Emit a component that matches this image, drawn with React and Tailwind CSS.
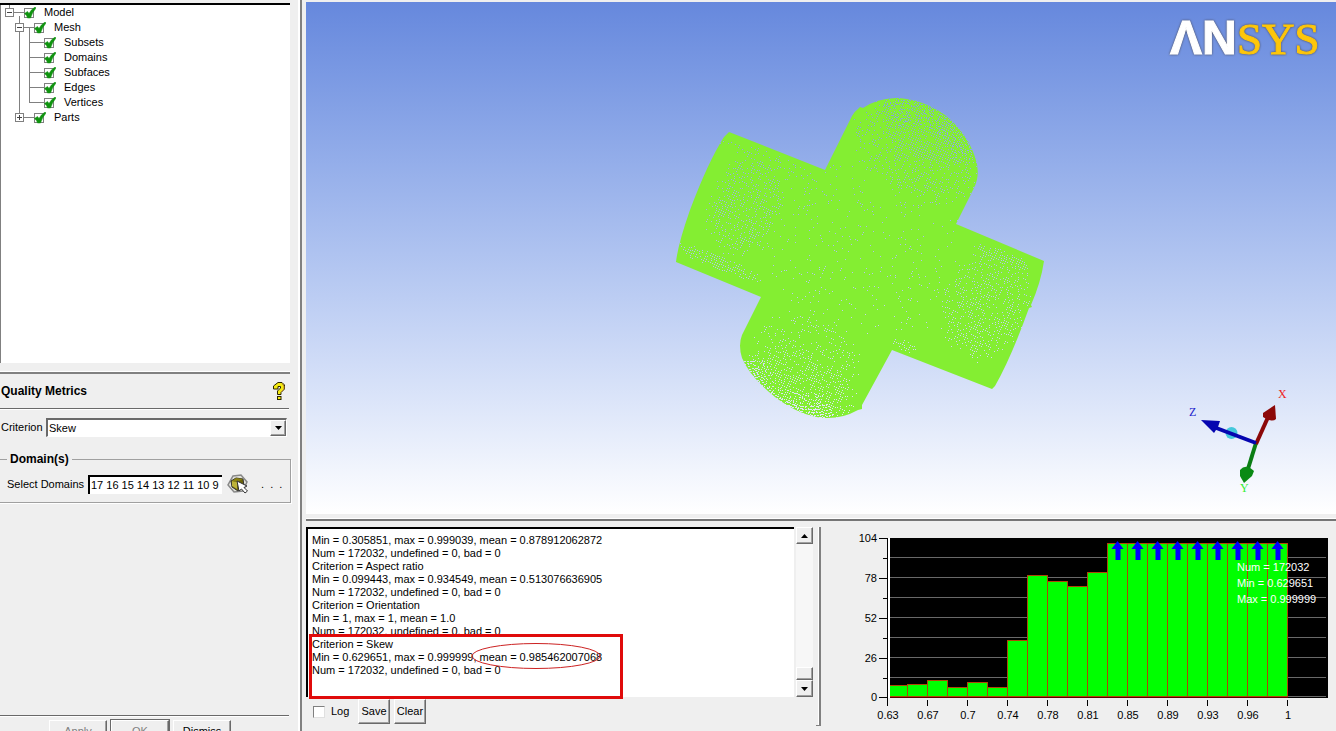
import { useState } from "react";
import clsx from "clsx";

const TREE = [
  { name: "Model", level: 0, node: "minus", lines: "M9.5 0V3M14 7.5H24M19.5 11V15" },
  { name: "Mesh", level: 1, node: "minus", lines: "M19.5 0V3M19.5 12V15M24 7.5H34M29.5 8V15" },
  { name: "Subsets", level: 2, lines: "M19.5 0V15M29.5 0V15M29 7.5H44" },
  { name: "Domains", level: 2, lines: "M19.5 0V15M29.5 0V15M29 7.5H44" },
  { name: "Subfaces", level: 2, lines: "M19.5 0V15M29.5 0V15M29 7.5H44" },
  { name: "Edges", level: 2, lines: "M19.5 0V15M29.5 0V15M29 7.5H44" },
  { name: "Vertices", level: 2, lines: "M19.5 0V15M29.5 0V8M29 7.5H44" },
  { name: "Parts", level: 1, node: "plus", lines: "M19.5 0V3M24 7.5H34" },
];

const LOG = `Min = 0.305851, max = 0.999039, mean = 0.878912062872
Num = 172032, undefined = 0, bad = 0
Criterion = Aspect ratio
Min = 0.099443, max = 0.934549, mean = 0.513076636905
Num = 172032, undefined = 0, bad = 0
Criterion = Orientation
Min = 1, max = 1, mean = 1.0
Num = 172032, undefined = 0, bad = 0
Criterion = Skew
Min = 0.629651, max = 0.999999, mean = 0.985462007068
Num = 172032, undefined = 0, bad = 0`;

// y of each bar top, bars are 20 wide
const BAR_TOPS = [685, 684, 680, 687, 682, 687, 640, 575, 581, 586, 572, 543, 543, 543, 543, 543, 543, 543, 543, 543];
const X_LABELS = ["0.63", "0.67", "0.7", "0.74", "0.78", "0.81", "0.85", "0.89", "0.93", "0.96", "1"];
const Y_LABELS = ["104", "78", "52", "26", "0"];

const RAISED = "border border-t-white border-l-white border-r-[#696969] border-b-[#696969] shadow-[inset_-1px_-1px_0_#a0a0a0]";

// areas of the mesh where the background shows through: centre, radii, tilt, density
const HOLES = [
  { x: 925, y: 130, rx: 60, ry: 34, a: 28, d: 0.7 },
  { x: 915, y: 155, rx: 72, ry: 45, a: 28, d: 0.35 },
  { x: 745, y: 205, rx: 38, ry: 56, a: 22, d: 0.42 },
  { x: 718, y: 262, rx: 50, ry: 8, a: 22, d: 0.7 },
  { x: 770, y: 160, rx: 56, ry: 9, a: 22, d: 0.3 },
  { x: 985, y: 305, rx: 46, ry: 60, a: 22, d: 0.45 },
  { x: 1004, y: 257, rx: 34, ry: 7, a: 22, d: 0.75 },
  { x: 905, y: 345, rx: 14, ry: 6, a: 22, d: 0.6 },
  { x: 800, y: 385, rx: 62, ry: 42, a: 24, d: 0.55 },
  { x: 806, y: 350, rx: 62, ry: 38, a: 24, d: 0.25 },
  { x: 860, y: 245, rx: 130, ry: 90, a: 22, d: 0.08 },
];

function noise(i, j) {
  const n = Math.sin(i * 127.1 + j * 311.7) * 43758.5453;
  return n - Math.floor(n);
}

function density(x, y) {
  let d = 0;
  for (const h of HOLES) {
    const r = (h.a * Math.PI) / 180;
    const u = (x - h.x) * Math.cos(r) + (y - h.y) * Math.sin(r);
    const v = -(x - h.x) * Math.sin(r) + (y - h.y) * Math.cos(r);
    const q = (u * u) / (h.rx * h.rx) + (v * v) / (h.ry * h.ry);
    if (q < 1) d = Math.max(d, h.d * Math.min(1, (1 - q) * 2.2));
  }
  return d;
}

// pinholes on a lattice that follows the pipe axis
function pinholes() {
  const c = Math.cos(0.38);
  const s = Math.sin(0.38);
  let d = "";
  for (let i = -90; i < 91; i++) {
    for (let j = -90; j < 91; j++) {
      const x = Math.round(860 + (i * c - j * s) * 2.3);
      const y = Math.round(258 + (i * s + j * c) * 2.3);
      if (noise(i, j) < density(x, y)) d += `M${x} ${y + 0.5}h1`;
    }
  }
  return d;
}

// open cells along the cap rims, drawn ring by ring
function capCells(cx, cy, from, to, size) {
  let d = "";
  for (let ring = 0; ring < 9; ring++) {
    const k = 1 - ring * 0.05;
    for (let t = from; t < to; t += 2.8) {
      if (noise(ring, t) < ring * 0.08) continue;
      const r = (t * Math.PI) / 180;
      const u = Math.cos(r) * 65 * k;
      const v = Math.sin(r) * 56 * k;
      const x = Math.round(cx + u * 0.88 - v * 0.47);
      const y = Math.round(cy + u * 0.47 + v * 0.88);
      d += `M${x} ${y + 0.5}h${ring < 5 ? size : 1}`;
    }
  }
  return d;
}

const PINHOLES = pinholes();
const CAPS = capCells(916, 158, 215, 335, 1) + capCells(803, 360, 38, 150, 2);

const OUTLINE =
  "M729 132L825 170L852 116Q855 111 858 109L860 107L863 108Q878 98 897 98Q922 99 945 115Q967 133 975 157Q981 174 974 188L956 224L1044 261Q1041 282 1031 305L1032 307L1029 308Q1011 358 995 386L992 389L892 350L862 405L862 409L858 410Q842 419 824 418Q800 416 775 397Q750 377 742 358Q738 345 742 335L761 297L676 262Q678 244 690 210Q708 162 724 137Z";

function TreeRow({ item }) {
  const [checked, setChecked] = useState(true);
  const cx = item.level === 0 ? 9.5 : 19.5;
  const gutter = (
    <svg
      className={clsx("block h-[15px]", item.level === 0 && "w-6", item.level === 1 && "w-[34px]", item.level === 2 && "w-11")}
      stroke="#808080"
      fill="none"
      shapeRendering="crispEdges"
      aria-hidden="true"
    >
      <path d={item.lines} />
      {item.node && (
        <>
          <rect x={cx - 4} y="3.5" width="8" height="8" fill="#fff" />
          <path stroke="#444" d={`M${cx - 2.5} 7.5h5` + (item.node === "plus" ? `M${cx} 5v5` : "")} />
        </>
      )}
    </svg>
  );
  return (
    <li className="flex h-[15px] items-center">
      {item.node ? <button type="button" aria-label={`Toggle ${item.name}`}>{gutter}</button> : gutter}
      <label className="flex items-center gap-2">
        <span className="grid w-3 items-center">
          <input
            type="checkbox"
            checked={checked}
            onChange={(e) => setChecked(e.target.checked)}
            className="col-start-1 row-start-1 size-[10px] appearance-none border border-[#808080] bg-white"
          />
          <svg className="pointer-events-none col-start-1 row-start-1 size-3" viewBox="0 0 12 12" aria-hidden="true">
            {checked && <path d="M0.5 6.5L3.500 4.500L5 6.500Q7 2.500 11 0L12 1Q8.500 5 6.500 11H3.500Q3 8.500 0.500 6.500Z" fill="#0f930f" stroke="#0f930f" strokeWidth="0.5" />}
          </svg>
        </span>
        <span>{item.name}</span>
      </label>
    </li>
  );
}

function HelpIcon() {
  return (
    <svg className="h-[18px] w-3" viewBox="0 0 12 18" aria-hidden="true">
      <path d="M5 .5h4l2.500 2.500v4L8 10.500v2H4.500V9L7.500 6V4.500H5V7H.5V4Z" fill="#f4ea10" stroke="#2b2400" />
      <path d="M9 1.500L11 4v3L8 10" fill="none" stroke="#b08030" />
      <rect x="4.500" y="14.500" width="3.500" height="3" fill="#f4ea10" stroke="#2b2400" />
    </svg>
  );
}

function PickIcon() {
  return (
    <svg className="h-5 w-[22px]" viewBox="0 0 22 20" aria-hidden="true">
      <path d="M6 2L14 1L20 8L16 17L7 18L1 11Z" fill="#e2e2da" stroke="#888" strokeWidth="1.500" />
      <path d="M4 7L9 4L16 5L17 12L11 17L5 13Z" fill="#6c6408" stroke="#333" />
      <path d="M5 7L10 8V15L5 12Z" fill="#bdb33a" />
      <path d="M9 4L16 5L10 8L5 7Z" fill="#8b8212" />
      <path d="M10 7L12 17L14.500 15L18 19L20.500 17L17 13.500L20 12Z" fill="#fff" stroke="#333" />
    </svg>
  );
}

function Rule() {
  return <div className="h-[2px] border-t border-[#696969] bg-white" />;
}

function SidePanel() {
  return (
    <aside className="flex w-[302px] shrink-0 flex-col border-r-2 border-[#808080] pt-[3px] pr-[10px] shadow-[inset_-2px_0_0_#fff]">
      <ul className="h-[360px] shrink-0 border-t-2 border-t-black bg-white shadow-[inset_1px_0_0_#808080]">
        {TREE.map((item) => <TreeRow key={item.name} item={item} />)}
      </ul>
      <div className="mt-2 h-[3px] shrink-0 border-t border-b-2 border-t-white border-b-[#808080]" />
      <header className="flex h-[34px] shrink-0 items-center justify-between pr-[5px] pl-px">
        <h2 className="text-xs font-bold">Quality Metrics</h2>
        <button type="button" aria-label="Help"><HelpIcon /></button>
      </header>
      <div className="pr-px"><Rule /></div>
      <div className="mt-2 flex shrink-0 items-center pr-[3px] pl-px">
        <label htmlFor="criterion" className="w-[45px]">Criterion</label>
        <div className="grid flex-1 items-center">
          <select
            id="criterion"
            defaultValue="Skew"
            className="col-start-1 row-start-1 h-[19px] w-full appearance-none border-t-2 border-r border-b border-l-2 border-t-[#696969] border-r-white border-b-white border-l-[#696969] bg-white px-px"
          >
            <option>Skew</option>
            <option>Aspect ratio</option>
            <option>Orientation</option>
          </select>
          <span className={clsx("pointer-events-none col-start-1 row-start-1 mt-px mr-px flex h-4 w-4 items-center justify-center justify-self-end bg-[#efefef]", RAISED)}>
            <svg className="h-1 w-[7px]" aria-hidden="true"><path d="M0 0H7L3.500 4Z" /></svg>
          </span>
        </div>
      </div>
      <fieldset className="mt-[15px] -mr-px ml-[-2px] h-[51px] shrink-0 border border-[#a0a0a0] pl-2 shadow-[1px_1px_0_#fff]">
        <legend className="px-[3px] text-xs leading-[14px] font-bold">Domain(s)</legend>
        <div className="mt-2 flex items-center">
          <label htmlFor="domains" className="w-[81px]">Select Domains</label>
          <input
            id="domains"
            defaultValue="17 16 15 14 13 12 11 10 9"
            className="h-[19px] w-[134px] border-t-2 border-l-2 border-black bg-white px-px"
          />
          <button type="button" aria-label="Pick domains" className="ml-[5px]"><PickIcon /></button>
          <button type="button" className="ml-3 whitespace-pre">.  .  .</button>
        </div>
      </fieldset>
      <footer className="mt-auto h-4 shrink-0 pr-px">
        <Rule />
        <div className="flex gap-1 pt-[3px] pl-[49px]">
          <button type="button" disabled className={clsx("h-[22px] w-[58px] text-[#808080]", RAISED)}>Apply</button>
          <button type="button" disabled className={clsx("h-[22px] w-[58px] text-[#808080] outline outline-[#696969]", RAISED)}>OK</button>
          <button type="button" className={clsx("h-[22px] w-[58px]", RAISED)}>Dismiss</button>
        </div>
      </footer>
    </aside>
  );
}

function Logo() {
  return (
    <svg className="absolute top-3 right-[14px] h-12 w-[154px] drop-shadow-[0_0_1px_#4a4a55]" viewBox="1168 14 154 48" role="img" aria-label="ANSYS">
      <text x="1170" y="54" fontSize="48" fontWeight="700" fill="#fff" stroke="#fff" className="font-['Liberation_Sans',sans-serif]">ΛN</text>
      <text x="1237" y="54" fontSize="45" fill="#fdc60b" stroke="#fdc60b" className="font-['Liberation_Serif',serif]">SYS</text>
    </svg>
  );
}

function Triad() {
  return (
    <svg className="absolute right-4 bottom-4 h-[115px] w-[140px]" viewBox="1180 383 140 115" aria-label="Axes">
      <circle cx="1231.500" cy="433" r="6" fill="#45c8dc" />
      <path d="M1256 443L1247 472" stroke="#0a7d14" strokeWidth="4" />
      <path d="M1240 470Q1246 463 1254 471L1252 476L1244 483L1240 476Z" fill="#0a8a14" />
      <path d="M1256 444L1269 415" stroke="#8c0808" strokeWidth="4" />
      <path d="M1275 405L1276 419Q1272 423 1263 417V413Z" fill="#8c0808" />
      <path d="M1256 443L1215 427.500" stroke="#0505b0" strokeWidth="4" />
      <path d="M1201 420L1220 421L1218 427L1214 433Z" fill="#0505b0" />
      <g fontSize="12" className="font-['Liberation_Serif',serif]">
        <text x="1278" y="398" fill="#e22">X</text>
        <text x="1189" y="416" fill="#22c">Z</text>
        <text x="1240" y="492" fill="#3e3">Y</text>
      </g>
    </svg>
  );
}

function Viewport() {
  return (
    <section className="relative min-h-0 flex-1 bg-linear-to-b from-[#6688dd] to-white">
      <svg className="absolute inset-0 size-full" viewBox="306 2 1030 512" aria-label="Mesh">
        <defs>
          <linearGradient id="sky" gradientUnits="userSpaceOnUse" x1="0" y1="2" x2="0" y2="514">
            <stop offset="0" stopColor="#6688dd" />
            <stop offset="1" stopColor="#fff" />
          </linearGradient>
        </defs>
        <path d={OUTLINE} fill="#84ee32" />
        <path d={PINHOLES + CAPS} stroke="url(#sky)" shapeRendering="crispEdges" />
      </svg>
      <Logo />
      <Triad />
    </section>
  );
}

function ScrollButton({ up }) {
  return (
    <button type="button" aria-label={up ? "Scroll up" : "Scroll down"} className={clsx("flex h-[17px] w-[17px] items-center justify-center bg-[#efefef]", RAISED)}>
      <svg className="h-1 w-[7px]" aria-hidden="true"><path d={up ? "M0 4H7L3.500 0Z" : "M0 0H7L3.500 4Z"} /></svg>
    </button>
  );
}

function LogPanel() {
  return (
    <section className="relative flex w-[510px] shrink-0 flex-col pt-[6px]">
      <div className="flex h-[170px] gap-[2px]">
        <textarea
          readOnly
          aria-label="Messages"
          value={LOG}
          className="block flex-1 resize-none overflow-hidden border-t-2 border-l-2 border-black bg-white px-1 pt-[5px] leading-[13px] whitespace-pre"
        />
        <div className="mr-[3px] flex w-[17px] flex-col bg-[#f7f7f7]">
          <ScrollButton up />
          <div className={clsx("mt-auto h-[13px] bg-[#efefef]", RAISED)} />
          <ScrollButton />
        </div>
      </div>
      <div className="flex items-start gap-1 pt-[2px] pl-[7px]">
        <label className="flex h-[25px] w-[41px] items-center gap-[6px]">
          <input type="checkbox" className="size-3 appearance-none border border-t-[#808080] border-r-[#e0e0e0] border-b-[#e0e0e0] border-l-[#808080] bg-white" />
          Log
        </label>
        <button type="button" className={clsx("h-[25px] w-8", RAISED)}>Save</button>
        <button type="button" className={clsx("h-[25px] w-8", RAISED)}>Clear</button>
      </div>
      {/* hand-drawn marks over the log */}
      <div className="pointer-events-none absolute top-[113px] left-[3px] h-[65px] w-[314px] border-3 border-[#e00b0b]" />
      <svg className="pointer-events-none absolute top-[121px] left-[164px] h-7 w-[134px]" viewBox="0 0 134 28" aria-hidden="true">
        <ellipse cx="66" cy="14" rx="64" ry="12.500" fill="none" stroke="#c22" />
      </svg>
    </section>
  );
}

function Histogram() {
  return (
    <section className="min-w-0 flex-1">
      <svg className="h-[210px] w-full" viewBox="822 521 514 210" preserveAspectRatio="xMinYMin" fontSize="11" aria-label="Skew histogram">
        <g shapeRendering="crispEdges">
          <rect x="890" y="538" width="438" height="160" />
          <path stroke="#696969" d="M890 557.500H1326M890 577.500H1326M890 597.500H1326M890 617.500H1326M890 637.500H1326M890 657.500H1326M890 677.500H1326M890 696.500H1326" />
          <rect x="888" y="538" width="2" height="160" fill="#fff" />
          {BAR_TOPS.map((top, i) => {
            const x = i === 0 ? 890 : 887 + i * 20;
            return <rect key={i} x={x} y={top} width={i === 0 ? 17 : 20} height={697 - top} fill="#0f0" />;
          })}
          {BAR_TOPS.map((top, i) => {
            const x = i === 0 ? 890 : 887 + i * 20;
            const right = 907 + i * 20;
            return (
              <g key={i} fill="#b04408">
                {i > 0 && <rect x={x} y={top} width="1" height={697 - top} />}
                <rect x={x} y={top} width={right - x + 1} height="1" />
                <rect x={right} y={top} width="1" height={697 - top} />
              </g>
            );
          })}
          <path stroke="#b04408" d="M890 696.500H1288" />
          <path stroke="#500" d="M890 697.500H1288" />
          <path stroke="#000" d="M887.500 538V705" />
          {Y_LABELS.map((l, i) => <path key={l} stroke="#000" d={`M879 ${i === 4 ? 697.5 : 538.5 + i * 40}H887` + (i < 4 ? `M883 ${558.5 + i * 40}H887` : "")} />)}
          {X_LABELS.map((l, i) => <path key={l} stroke="#000" d={`M${887.5 + i * 40} 700V706`} />)}
        </g>
        {Y_LABELS.map((l, i) => <text key={l} x="877" y={i === 4 ? 701 : 542 + i * 40} textAnchor="end">{l}</text>)}
        {X_LABELS.map((l, i) => <text key={l} x={888 + i * 40} y="719" textAnchor="middle">{l}</text>)}
        {BAR_TOPS.slice(11).map((_, i) => (
          <path key={i} fill="#00f" d={`M${1117.5 + i * 20} 541l6 8h-3v11h-5v-11h-4Z`} />
        ))}
        <g fill="#fff">
          <text x="1237" y="571">Num = 172032</text>
          <text x="1237" y="587">Min = 0.629651</text>
          <text x="1237" y="603">Max = 0.999999</text>
        </g>
      </svg>
    </section>
  );
}

export default function App() {
  return (
    <div className="flex h-screen overflow-hidden bg-[#efefef] font-['Liberation_Sans',Arial,sans-serif] text-[11px] leading-[13px] text-black">
      <SidePanel />
      <main className="flex min-w-0 flex-1 flex-col pt-[2px] pl-1">
        <Viewport />
        <div className="mt-1 h-[3px] border-t border-b-2 border-t-white border-b-[#757575]" />
        <div className="flex h-[210px] shrink-0">
          <LogPanel />
          <div className="mt-[6px] mr-px h-[199px] w-[5px] border-r-2 border-b border-[#808080] shadow-[inset_-1px_0_0_#fff]" />
          <Histogram />
        </div>
      </main>
    </div>
  );
}
